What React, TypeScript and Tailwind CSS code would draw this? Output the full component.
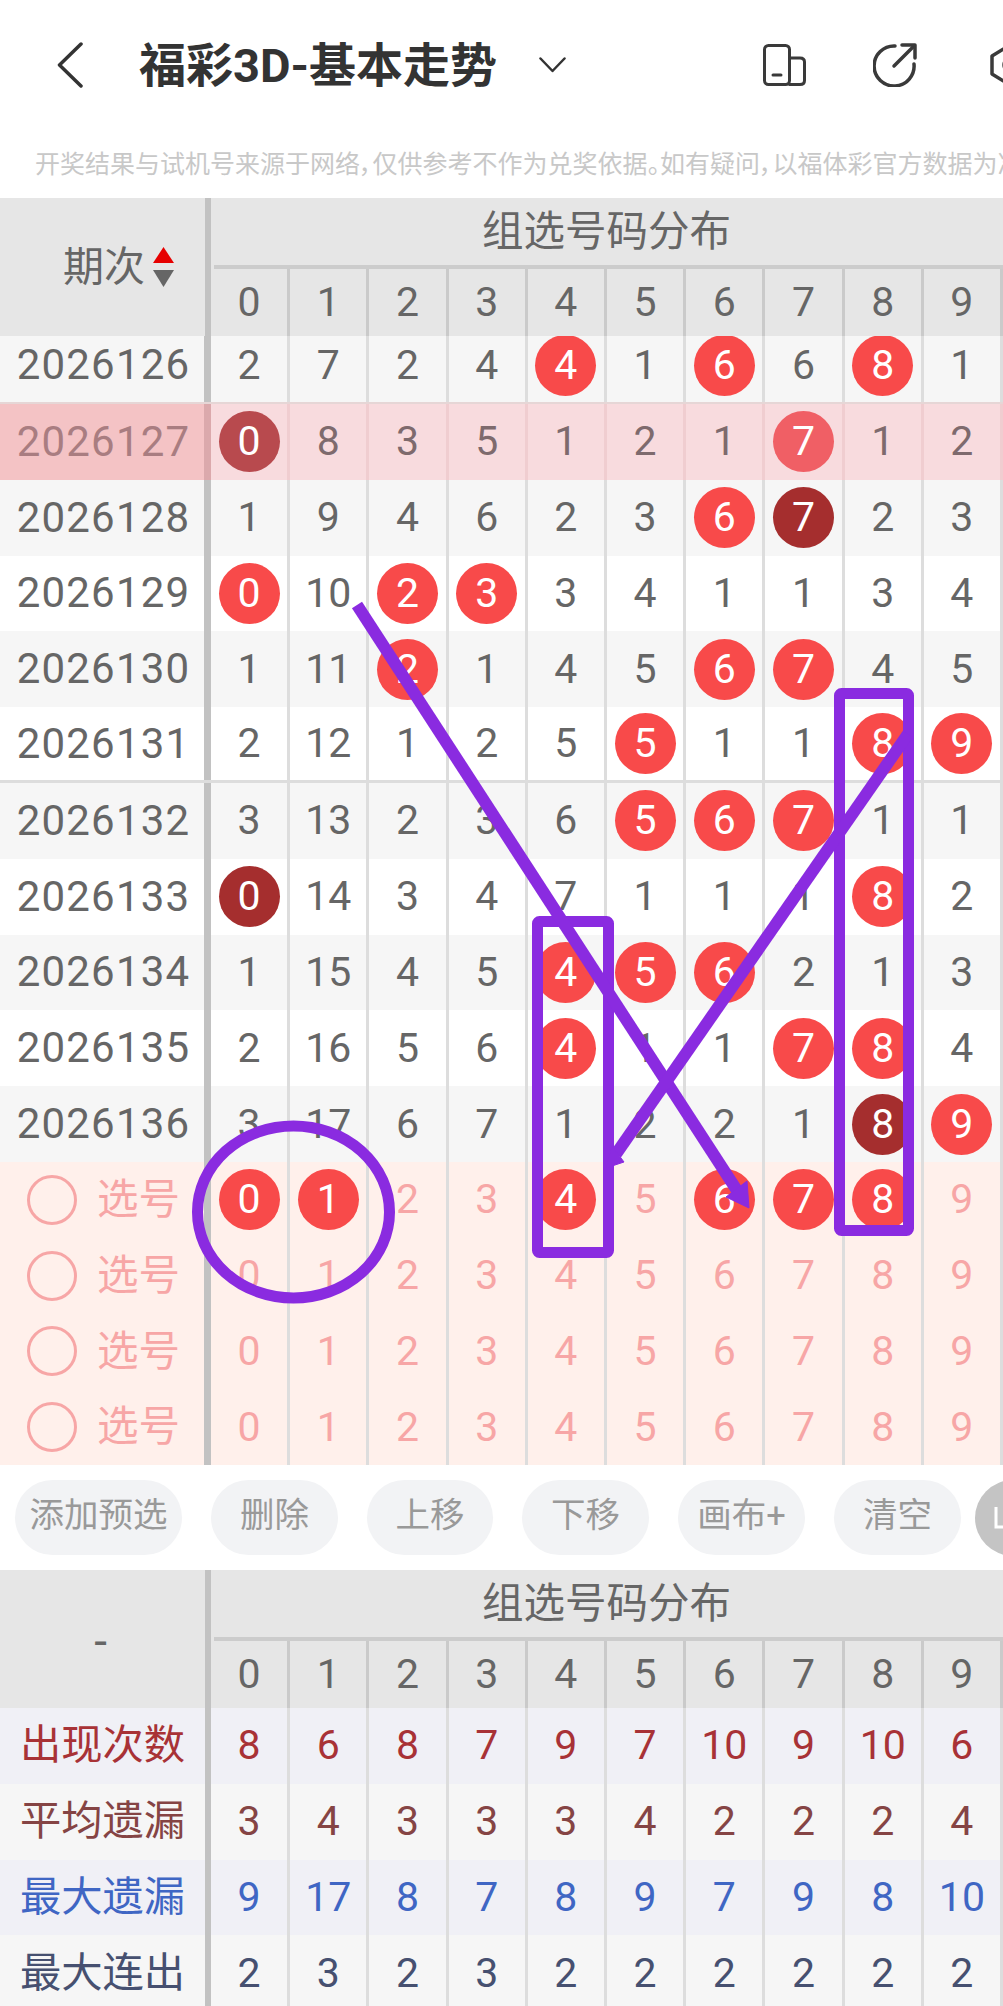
import clsx from "clsx";

const digits = ["0", "1", "2", "3", "4", "5", "6", "7", "8", "9"];

// * red ball, # dark ball
const rows = [
  { id: "2026126", cells: "2 7 2 4 *4 1 *6 6 *8 1", line: "border-b-[2px] border-[#e6d6d6]" },
  { id: "2026127", cells: "#0 8 3 5 1 2 1 *7 1 2", hot: true },
  { id: "2026128", cells: "1 9 4 6 2 3 *6 #7 2 3" },
  { id: "2026129", cells: "*0 10 *2 *3 3 4 1 1 3 4", white: true },
  { id: "2026130", cells: "1 11 *2 1 4 5 *6 *7 4 5" },
  { id: "2026131", cells: "2 12 1 2 5 *5 1 1 *8 *9", white: true, line: "border-b-[3px] border-[#dddddd]" },
  { id: "2026132", cells: "3 13 2 3 6 *5 *6 *7 1 1" },
  { id: "2026133", cells: "#0 14 3 4 7 1 1 1 *8 2", white: true },
  { id: "2026134", cells: "1 15 4 5 *4 *5 *6 2 1 3" },
  { id: "2026135", cells: "2 16 5 6 *4 1 1 *7 *8 4", white: true },
  { id: "2026136", cells: "3 17 6 7 1 2 2 1 #8 *9" },
];

const picks = [
  "*0 *1 2 3 *4 5 *6 *7 *8 9",
  "0 1 2 3 4 5 6 7 8 9",
  "0 1 2 3 4 5 6 7 8 9",
  "0 1 2 3 4 5 6 7 8 9",
];

const stats = [
  { label: "出现次数", cells: "8 6 8 7 9 7 10 9 10 6", bg: "bg-[#f0f0f6]", text: "text-[#a83236]" },
  { label: "平均遗漏", cells: "3 4 3 3 3 4 2 2 2 4", bg: "bg-[#f6f6f6]", text: "text-[#854444]" },
  { label: "最大遗漏", cells: "9 17 8 7 8 9 7 9 8 10", bg: "bg-[#f0f0f6]", text: "text-[#3f66c4]" },
  { label: "最大连出", cells: "2 3 2 3 2 2 2 2 2 2", bg: "bg-[#f6f6f6]", text: "text-[#465070]" },
];

const actions = [
  { label: "添加预选", w: "w-[167px]" },
  { label: "删除", w: "w-[127px]" },
  { label: "上移", w: "w-[126px]" },
  { label: "下移", w: "w-[127px]" },
  { label: "画布+", w: "w-[127px]" },
  { label: "清空", w: "w-[127px]" },
];

const Cell = ({ value, hot, text, line }: { value: string; hot?: boolean; text: string; line: string }) => {
  const kind = value[0];
  const num = value.replace(/[*#]/, "");
  return (
    <div className={clsx("flex items-center justify-center border-r-[3px]", line)}>
      {kind === "*" || kind === "#" ? (
        <span
          className={clsx(
            "flex h-[61px] w-[61px] items-center justify-center rounded-full text-white",
            kind === "*" && (hot ? "bg-[#f05f65]" : "bg-[#f84a4a]"),
            kind === "#" && (hot ? "bg-[#b84a4e]" : "bg-[#a52e2e]"),
          )}
        >
          {num}
        </span>
      ) : (
        <span className={text}>{num}</span>
      )}
    </div>
  );
};

const TableHeader = ({ left }: { left: React.ReactNode }) => (
  <div className="flex h-[138px] bg-[#e6e6e6]">
    <div className="flex w-[211px] shrink-0 border-r-[6px] border-[#c2c2c2] text-[#666666]">{left}</div>
    <div className="flex-1">
      <div className="ml-[3px] flex h-[71px] items-center justify-center border-b-[4px] border-[#cccccc] pr-[4px] text-[41.5px] text-[#666666]">
        组选号码分布
      </div>
      <div className="grid h-[67px] grid-cols-10">
        {digits.map((d) => (
          <Cell key={d} value={d} text="text-[#666666]" line="border-[#cacaca]" />
        ))}
      </div>
    </div>
  </div>
);

const Annotations = () => (
  <svg className="pointer-events-none absolute left-0 top-0" width="1003" height="2006" fill="none" stroke="#8a2be0">
    <ellipse cx="293.5" cy="1212" rx="96" ry="86" strokeWidth="11" />
    <rect x="537.5" y="921.5" width="71" height="331" rx="2" strokeWidth="11" />
    <rect x="839.5" y="693.5" width="69" height="537" rx="2" strokeWidth="11" />
    <path d="M357 605 L738 1192" strokeWidth="12" />
    <path d="M749 1208 L726 1197 L747 1181 Z" fill="#8a2be0" strokeWidth="1" />
    <path d="M908 734 L616 1154" strokeWidth="12" />
    <path d="M606 1168 L624 1162 L612 1146 Z" fill="#8a2be0" strokeWidth="1" />
  </svg>
);

export default function App() {
  return (
    <div className="relative h-[2006px] w-[1003px] overflow-hidden bg-white font-['Roboto','Noto_Sans_CJK_SC',sans-serif] text-[41px] leading-none">
      {/* top bar */}
      <div className="flex h-[130px] items-center text-[#333333]">
        <svg className="ml-[57px] shrink-0" width="26" height="46" viewBox="0 0 26 46" fill="none" stroke="#333333" strokeWidth="3.5" strokeLinecap="round" strokeLinejoin="round">
          <path d="M24 2 L2.5 23 L24 44" />
        </svg>
        <div className="ml-[56px] w-[360px] shrink-0 whitespace-nowrap text-[47px] font-bold">福彩3D-基本走势</div>
        <svg className="ml-[40px] shrink-0" width="27" height="16" viewBox="0 0 27 16" fill="none" stroke="#333333" strokeWidth="2.5" strokeLinecap="round" strokeLinejoin="round">
          <path d="M1.5 1.5 L13.5 14 L25.5 1.5" />
        </svg>
        <svg className="ml-[197px] shrink-0" width="43" height="42" viewBox="0 0 43 42" fill="none" stroke="#3a3a3a" strokeWidth="3" strokeLinecap="round" strokeLinejoin="round">
          <rect x="1.5" y="1.5" width="25" height="39" rx="4" />
          <path d="M26.5 14 H37 Q41.5 14 41.5 18 V36.5 Q41.5 40.5 37 40.5 H26.5" />
          <path d="M10 31 H18" />
        </svg>
        <svg className="ml-[67px] shrink-0" width="44" height="44" viewBox="0 0 44 44" fill="none" stroke="#3a3a3a" strokeWidth="3.5" strokeLinecap="round" strokeLinejoin="round">
          <path d="M22 3 A20 20 0 1 0 41 21" />
          <path d="M21 23 L41 3" />
          <path d="M29 2 H42 V15" />
        </svg>
        <svg className="ml-[73px] shrink-0" width="40" height="44" viewBox="0 0 40 44" fill="none" stroke="#3a3a3a" strokeWidth="3.5" strokeLinejoin="round">
          <path d="M20 2 L2 13 V31 L20 42 L38 31 V13 Z" />
          <circle cx="20" cy="22" r="6" />
        </svg>
      </div>

      {/* notice */}
      <div className="flex h-[68px] items-center overflow-hidden whitespace-nowrap pl-[35px] text-[25px] text-[#c8c8c8] [font-feature-settings:'palt']">
        开奖结果与试机号来源于网络，仅供参考不作为兑奖依据。如有疑问，以福体彩官方数据为准
      </div>

      {/* trend table */}
      <TableHeader
        left={
          <div className="flex flex-1 items-center pl-[63px]">
            <span className="text-[41px]">期次</span>
            <svg className="ml-[8px]" width="21" height="40" viewBox="0 0 21 40">
              <path d="M10.5 0 L21 16 H0 Z" fill="#e60000" />
              <path d="M0 23 H21 L10.5 40 Z" fill="#666666" />
            </svg>
          </div>
        }
      />
      <div className="h-[826px] overflow-hidden">
        <div className="-mt-[7.8px]">
          {rows.map((r) => (
            <div
              key={r.id}
              className={clsx(
                "relative flex h-[75.8px]",
                r.hot ? "bg-[#f8dbde]" : r.white ? "bg-white" : "bg-[#f6f6f6]",
                r.line,
              )}
            >
              <div
                className={clsx(
                  "flex w-[211px] shrink-0 items-center justify-center border-r-[7px] pl-[3px] text-[42px] tracking-[1.2px]",
                  r.hot ? "border-[#dba9ac] bg-[#f4c3c5] text-[#a97d81]" : "border-[#c2c2c2] text-[#666666]",
                )}
              >
                {r.id}
              </div>
              <div className="grid flex-1 grid-cols-10">
                {r.cells.split(" ").map((c, i) => (
                  <Cell
                    key={i}
                    value={c}
                    hot={r.hot}
                    text={r.hot ? "text-[#7e6a6d]" : "text-[#666666]"}
                    line={r.hot ? "border-[#f0cdd0]" : "border-[#dddddd]"}
                  />
                ))}
              </div>
            </div>
          ))}
        </div>
      </div>

      {/* pick rows */}
      <div className="bg-[#fff0eb] text-[#f7a6a6]">
        {picks.map((p, idx) => (
          <div key={idx} className="flex h-[75.75px]">
            <div className="flex w-[211px] shrink-0 items-center border-r-[7px] border-[#c2c2c2] pl-[27px]">
              <span className="h-[50px] w-[50px] rounded-full border-[3px] border-[#f7a6a6]" />
              <span className="ml-[20px] text-[41.5px]">选号</span>
            </div>
            <div className="grid flex-1 grid-cols-10">
              {p.split(" ").map((c, i) => (
                <Cell key={i} value={c} text="text-[#f7a6a6]" line="border-[#dddddd]" />
              ))}
            </div>
          </div>
        ))}
      </div>

      {/* actions */}
      <div className="flex h-[105px] items-center gap-[29px] pl-[15px]">
        {actions.map((a) => (
          <div
            key={a.label}
            className={clsx(
              "flex h-[75px] shrink-0 items-center justify-center rounded-full bg-[#f2f3f5] pb-[4px] text-[34.5px] text-[#999999]",
              a.w,
            )}
          >
            {a.label}
          </div>
        ))}
        <div className="-ml-[15px] flex h-[76px] w-[76px] shrink-0 items-center rounded-full bg-[#c4c4c4]">
          <svg className="ml-[19px]" width="12" height="22" viewBox="0 0 12 22" fill="none" stroke="white" strokeWidth="3">
            <path d="M2 0 V20 H12" />
          </svg>
        </div>
      </div>

      {/* stats table */}
      <TableHeader
        left={<div className="flex flex-1 justify-center pr-[4px] pt-[48px] text-[46px]">-</div>}
      />
      {stats.map((s) => (
        <div key={s.label} className={clsx("flex h-[75.8px]", s.bg, s.text)}>
          <div className="flex w-[211px] shrink-0 items-center justify-center border-r-[6px] border-[#c2c2c2] text-[41.3px]">
            {s.label}
          </div>
          <div className="grid flex-1 grid-cols-10">
            {s.cells.split(" ").map((c, i) => (
              <Cell key={i} value={c} text="" line="border-[#dddddd]" />
            ))}
          </div>
        </div>
      ))}

      <Annotations />
    </div>
  );
}
